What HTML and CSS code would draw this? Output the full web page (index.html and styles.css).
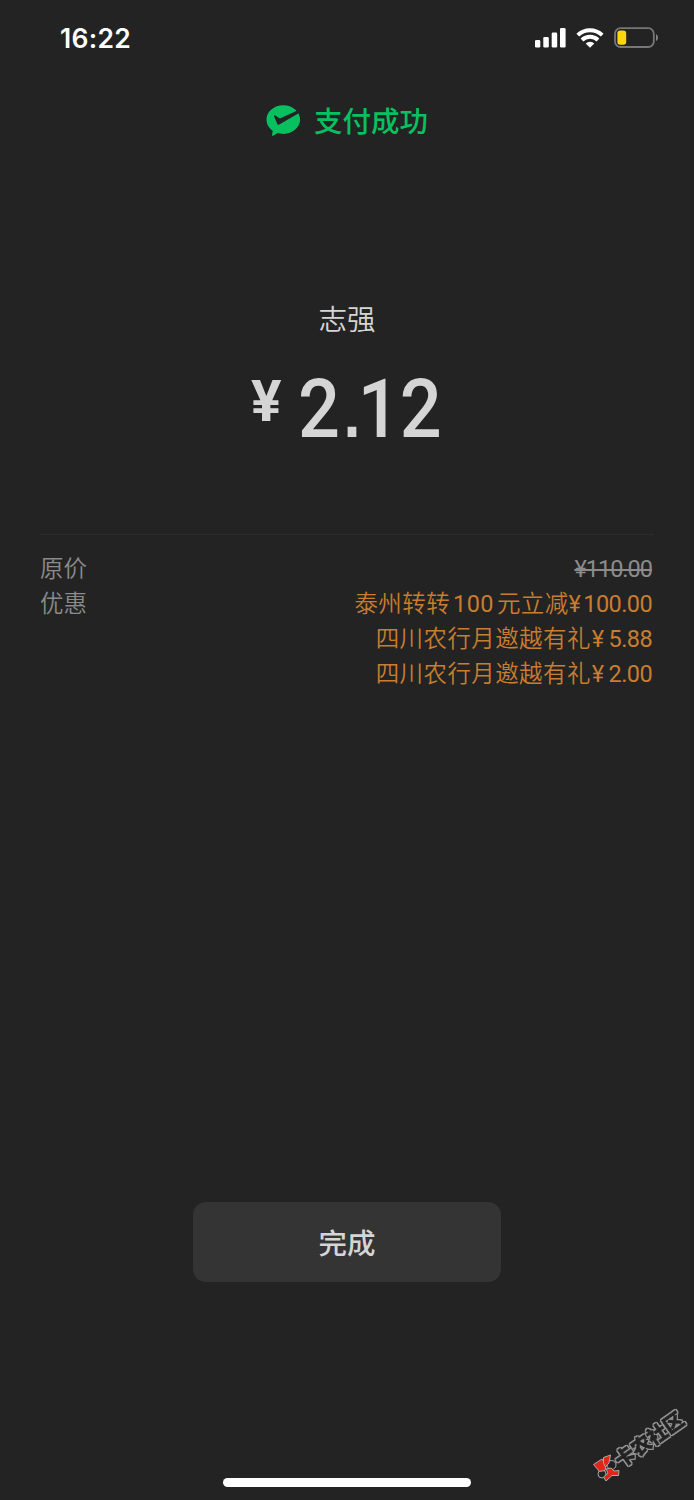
FILE: index.html
```html
<!DOCTYPE html>
<html lang="zh-CN">
<head>
<meta charset="utf-8">
<title>支付成功</title>
<link rel="stylesheet" href="styles.css">
</head>
<body>
<div class="screen">
  <header class="status">
    <span class="time">16:22</span>
    <svg class="status-icons" width="125" height="24" viewBox="534 26 125 24">
      <g fill="#fff">
        <rect x="535" y="40" width="5.3" height="7.5" rx="1.3"/>
        <rect x="543.3" y="37" width="5.5" height="10.5" rx="1.3"/>
        <rect x="551.7" y="32.5" width="5.5" height="15" rx="1.3"/>
        <rect x="560" y="28" width="5.6" height="19.5" rx="1.3"/>
        <path d="M590 47.7l-4.3-4.2a6.2 6.2 0 0 1 8.6 0z"/>
      </g>
      <g fill="none" stroke="#fff" stroke-width="3.9">
        <path d="M577.8 35.200a17.400 17.400 0 0 1 24.400 0"/>
        <path d="M582 40a11.600 11.600 0 0 1 16 0"/>
      </g>
      <rect x="615" y="28.2" width="38.8" height="18.8" rx="5.5" fill="none" stroke="#777" stroke-width="1.8"/>
      <path d="M656 34.3c2.6 1 2.6 5.8 0 6.8z" fill="#858585"/>
      <rect x="617.4" y="30.6" width="8.8" height="14.2" rx="2.8" fill="#ffd60a"/>
    </svg>
  </header>
  <div class="result">
    <svg class="logo" width="36" height="34" viewBox="265 104 36 34">
      <path fill="#07c160" d="M283.3 105.3c9.3 0 16.8 6.4 16.8 14.3s-7.500 14.300-16.800 14.300c-2 0-3.900-.3-5.600-.8l-4.700 2.600c-.8.4-1.200 0-1-.8l.8-4c-3.900-2.600-6.300-6.700-6.300-11.300 0-7.900 7.500-14.300 16.800-14.300z"/>
      <path fill="#232323" d="M274.100 116.400c-.3-.9.5-1.400 1.200-.9l4.600 3.100 16.900-7.800 1.900 2.500-19.400 11.200c-1 .6-1.600.4-2-.6z"/>
    </svg>
    <span class="result-text">支付成功</span>
  </div>
  <main class="payment">
    <div class="payee">志强</div>
    <div class="amount"><span class="yen">¥</span><span class="digits">2<i class="dot">.</i>12</span></div>
  </main>
  <section class="details">
    <div class="row"><span>原价</span><s class="old">¥110.00</s></div>
    <div class="row"><span>优惠</span>
      <div class="offers">
        <div class="offer">泰州转转<span class="count">100</span>元立减<span class="unit">¥</span><span class="num">100.00</span></div>
        <div class="offer">四川农行月邀越有礼<span class="unit wide">¥</span><span class="num">5.88</span></div>
        <div class="offer">四川农行月邀越有礼<span class="unit wide">¥</span><span class="num">2.00</span></div>
      </div>
    </div>
  </section>
  <button class="done">完成</button>
  <div class="home"></div>
  <svg class="mark" width="114" height="100" viewBox="580 1395 114 100">
    <filter id="outline" x="-10%" y="-20%" width="120%" height="140%">
      <feMorphology in="SourceAlpha" operator="dilate" radius="1" result="wide"/>
      <feFlood flood-color="#999"/>
      <feComposite in2="wide" operator="in" result="edge"/>
      <feMerge><feMergeNode in="edge"/><feMergeNode in="SourceGraphic"/></feMerge>
    </filter>
    <g filter="url(#outline)">
      <text class="mark-text" transform="translate(621 1468.500) rotate(-35)">卡农社区</text>
    </g>
    <g stroke="#aaa" stroke-width="1" stroke-linejoin="round">
      <circle cx="611.500" cy="1465" r="4.500" fill="#222"/>
      <circle cx="602" cy="1474" r="4" fill="#222"/>
      <path fill="#e1251b" d="M593.500 1464.500l8.500-5.500 4 6.500-1 5-5.500 1z"/>
      <path fill="#e1251b" d="M603.500 1457.500l7-2.500-1.500 8-3.500 4-2-4z"/>
      <path fill="#e1251b" d="M606 1469l5-1 3 3 5-.5-.5 5-6.500 0-6 5.500-2.500-4 4.500-4z"/>
    </g>
  </svg>
</div>
</body>
</html>
```
FILE: styles.css
```css
* { box-sizing: border-box; }
body { margin: 0; background: #232323; }
.screen {
  position: relative;
  display: flex;
  flex-direction: column;
  width: 694px;
  height: 1500px;
  overflow: hidden;
  background: #232323;
  color: #d5d5d5;
  font-family: Roboto, "Noto Sans CJK SC", sans-serif;
}
.status {
  display: flex;
  justify-content: space-between;
  align-items: flex-start;
  height: 76px;
  padding: 26px 35px 0 60px;
}
.time {
  color: #fff;
  font: 600 26.5px/24px Inter, sans-serif;
  letter-spacing: .3px;
}
.result {
  display: flex;
  align-items: center;
  height: 90px;
  padding-left: 265px;
  gap: 13px;
}
.result-text { padding-top: 4px; color: #07c160; font-size: 28.500px; font-weight: 500; line-height: 40px; }
.payment { display: flex; flex-direction: column; height: 368px; padding-top: 135px; }
.payee { text-align: center; font-size: 28.500px; font-weight: 350; line-height: 40px; }
.amount { display: flex; padding: 25px 0 0 251px; font-weight: 500; }
.yen { width: 47px; font-size: 57px; font-weight: 700; line-height: 72px; }
.digits {
  font-size: 82px;
  line-height: 86px;
  white-space: nowrap;
  transform: scaleX(.9);
  transform-origin: left;
}
.dot { margin: 0 -3px 0 4px; font: 700 68px/1 "Liberation Sans", sans-serif; }
.details {
  height: 666px;
  margin: 0 40px;
  padding-top: 17px;
  border-top: 1px solid #2c2c2c;
  color: #8b8b8b;
  font-size: 23.500px;
  font-weight: 350;
  line-height: 35px;
}
.row { display: flex; justify-content: space-between; padding-right: 2px; }
.old {
  height: 35px;
  font-weight: 400;
  letter-spacing: -1px;
  text-decoration-thickness: 2px;
}
.offers { color: #c87d2f; letter-spacing: .4px; }
.offer { display: flex; justify-content: flex-end; white-space: nowrap; }
.count { margin: 0 3px; font-weight: 400; }
.unit { margin-right: 2px; font-weight: 400; }
.wide { margin: 0 4px 0 1px; }
.num { font-weight: 400; letter-spacing: -.6px; }
.done {
  align-self: center;
  width: 308px;
  height: 80px;
  border: 0;
  border-radius: 13px;
  margin-top: 2px;
  padding: 0 0 1px;
  background: #343434;
  color: #d5d5d5;
  font: 500 28.500px/79px "Noto Sans CJK SC", sans-serif;
}
.home { align-self: center; width: 248px; height: 9px; margin-top: 196px; border-radius: 5px; background: #fff; }
.mark { position: absolute; right: 0; bottom: 5px; }
.mark-text {
  font: 900 20px "Noto Sans CJK SC", sans-serif;
  letter-spacing: -.3px;
  fill: #222;
  stroke: #222;
  stroke-width: .8px;
}
```
